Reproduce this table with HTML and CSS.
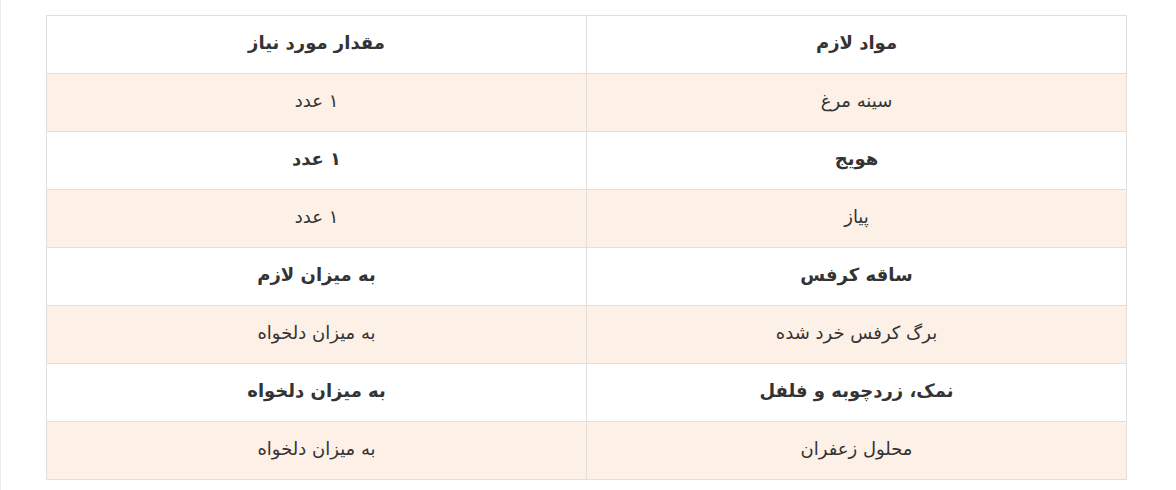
FILE: index.html
```html
<!DOCTYPE html>
<html lang="fa" dir="rtl">
<head>
<meta charset="utf-8">
<link rel="stylesheet" href="styles.css">
</head>
<body>
<div class="page">
<table class="ing">
<thead>
<tr><th>مواد لازم</th><th>مقدار مورد نیاز</th></tr>
</thead>
<tbody>
<tr class="alt"><td>سینه مرغ</td><td>۱ عدد</td></tr>
<tr class="bold"><td>هویج</td><td>۱ عدد</td></tr>
<tr class="alt"><td>پیاز</td><td>۱ عدد</td></tr>
<tr class="bold"><td>ساقه کرفس</td><td>به میزان لازم</td></tr>
<tr class="alt"><td>برگ کرفس خرد شده</td><td>به میزان دلخواه</td></tr>
<tr class="bold"><td>نمک، زردچوبه و فلفل</td><td>به میزان دلخواه</td></tr>
<tr class="alt"><td>محلول زعفران</td><td>به میزان دلخواه</td></tr>
</tbody>
</table>
</div>
</body>
</html>
```
FILE: styles.css
```css
html, body {
  margin: 0;
  padding: 0;
  background: #ffffff;
}
.page {
  padding: 15px 49px 0 46px;
  border-left: 1px solid #ececec;
  height: 490px;
  box-sizing: border-box;
}
.ing {
  width: 1081px;
  border-collapse: collapse;
  font-family: "DejaVu Sans", "Noto Sans", sans-serif;
  font-size: 18px;
  line-height: 20px;
  color: #333333;
}
.ing th, .ing td {
  border: 1px solid #e2dedb;
  height: 58px;
  padding: 0 10px 3px;
  box-sizing: border-box;
  text-align: center;
  vertical-align: middle;
  width: 50%;
}
.ing th {
  font-weight: bold;
  background: #ffffff;
}
.ing tr.alt td {
  background: #fcf0e7;
  font-weight: normal;
}
.ing tr.bold td {
  background: #ffffff;
  font-weight: bold;
}
```
